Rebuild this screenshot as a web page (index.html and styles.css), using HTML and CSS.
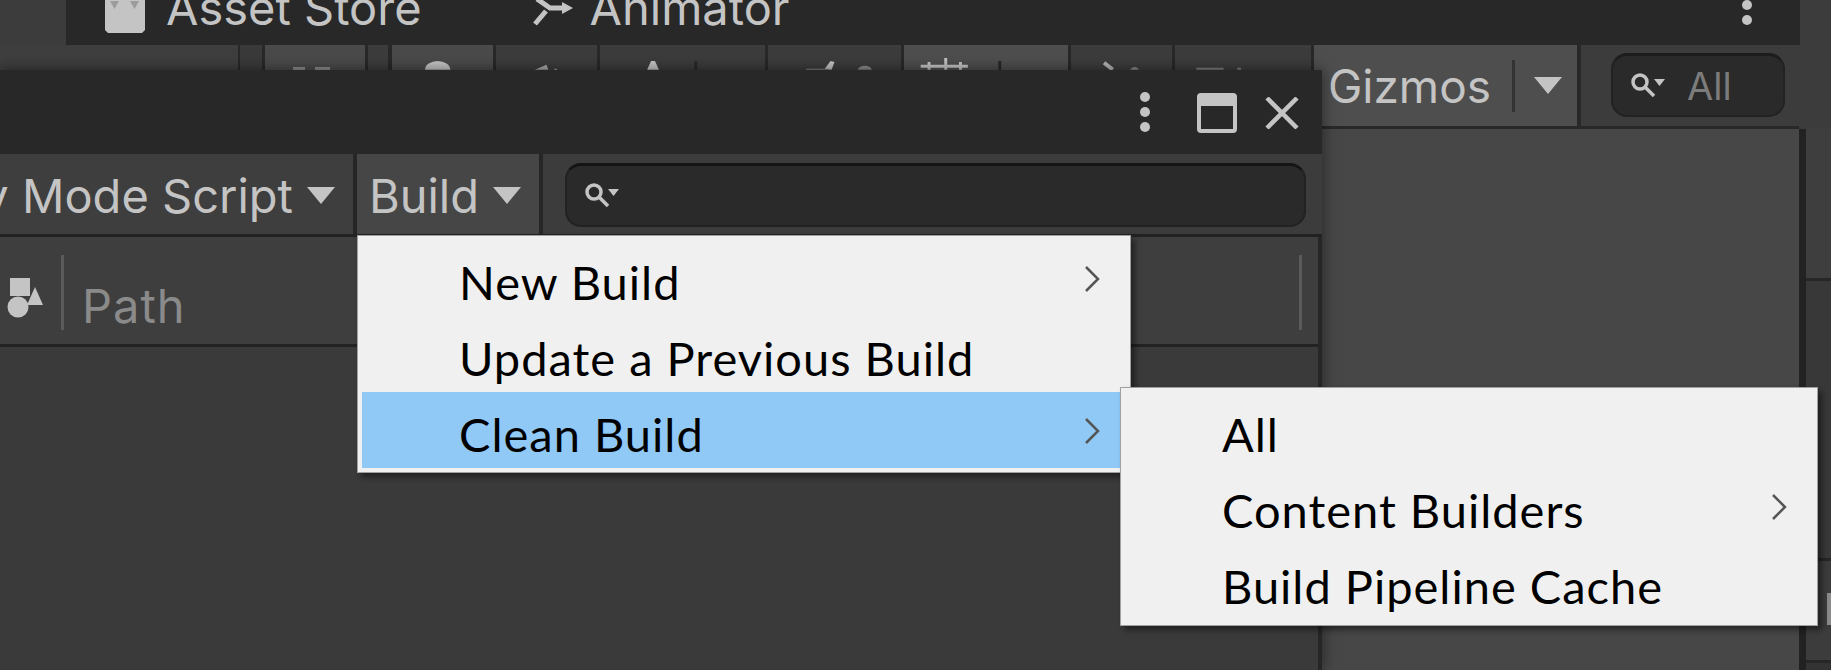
FILE: index.html
```html
<!DOCTYPE html>
<html lang="en">
<head>
  <meta charset="UTF-8" />
  <title>Addressables Groups</title>
  <link rel="stylesheet" href="styles.css">
</head>
<body>

<div class="editor">
  <div class="tabs">
    <div class="tab tab-store">
      <svg class="store-icon" viewBox="0 0 40 33">
        <path fill="#c4c4c4" d="M0 0h40v30l-3 3H3l-3-3z"/>
        <path fill="#9c9c9c" d="M5 1h9l-4.500 8zM25 1h9l-4.500 8z"/>
      </svg>
      <span>Asset Store</span>
    </div>
    <div class="tab tab-animator">
      <svg class="animator-icon" viewBox="0 0 41 26">
        <path fill="none" stroke="#c4c4c4" stroke-width="5" d="M3 24L14 11M5 -1l13 9h14"/>
        <path fill="#c4c4c4" d="M30 2l11 6-11 6z"/>
      </svg>
      <span>Animator</span>
    </div>
    <div class="tab-dots">
      <i></i><i></i><i></i>
    </div>
  </div>

  <div class="toolbar">
    <div class="tool-spacer"></div>
    <div class="tool tool-a">
      <svg class="tool-icon" viewBox="0 0 100 25"><path fill="#8a8a8a" d="M28 22h12v3H28zM50 22h15v3H50z"/></svg>
    </div>
    <div class="tool tool-b">
      <svg class="tool-icon" viewBox="0 0 104 25"><path fill="#c4c4c4" d="M34 25a13 9 0 0 1 26 0z"/></svg>
    </div>
    <div class="tool tool-c">
      <svg class="tool-icon" viewBox="0 0 104 25"><path fill="#a8a8a8" d="M40 25l12-5 2 5zM60 24h3v1h-3z"/></svg>
    </div>
    <div class="tool tool-d">
      <svg class="tool-icon" viewBox="0 0 168 25"><path fill="#c4c4c4" d="M48 25l4-9h4l4 9z"/><path fill="#282828" d="M96 16h3v9h-3z"/></svg>
    </div>
    <div class="tool tool-e">
      <svg class="tool-icon" viewBox="0 0 136 25"><path fill="#c4c4c4" d="M58 24l6-8 4 1-3 8z"/><path fill="#8a8a8a" d="M39 24h24v1H39z"/><path fill="#8a8a8a" d="M92 25a7 4 0 0 1 14 0z"/></svg>
    </div>
    <div class="tool tool-f">
      <svg class="tool-icon" viewBox="0 0 167 25"><path fill="#c4c4c4" d="M17 20h48v3H17zM24 17h3v8h-3zM41 13h3v12h-3zM56 17h3v8h-3z"/><path fill="#282828" d="M96 16h3v9h-3z"/></svg>
    </div>
    <div class="tool tool-g">
      <svg class="tool-icon" viewBox="0 0 104 25"><path fill="none" stroke="#b4b4b4" stroke-width="4" d="M34 18l9 7"/><path fill="#8a8a8a" d="M61 25a5 5 0 0 1 9 0z"/></svg>
    </div>
    <div class="tool tool-h">
      <svg class="tool-icon" viewBox="0 0 140 25"><path fill="#7c7c7c" d="M22 23h28v2H22zM64 23h4v2h-4z"/></svg>
    </div>
    <div class="gizmos">
      <span>Gizmos</span>
      <i class="gizmos-line"></i>
      <i class="arrow"></i>
    </div>
    <div class="tool-gap"></div>
    <div class="scene-search">
      <svg class="search-icon" viewBox="0 0 36 28">
        <circle cx="10" cy="10" r="7" fill="none" stroke="#c4c4c4" stroke-width="3.500"/>
        <path fill="none" stroke="#c4c4c4" stroke-width="3.500" d="M15 15l9 9"/>
        <path fill="#c4c4c4" d="M24 7h11l-5.500 7z"/>
      </svg>
      <span>All</span>
    </div>
  </div>

  <div class="scene">
    <div class="scene-view"></div>
    <div class="side-strip"></div>
    <div class="side-panel">
      <div class="side-top"></div>
      <div class="side-mid"></div>
      <div class="side-low"><i class="side-mark"></i></div>
      <div class="side-end"></div>
    </div>
  </div>
</div>

<div class="window">
  <div class="win-title">
    <div class="win-dots"><i></i><i></i><i></i></div>
    <svg class="win-max" viewBox="0 0 40 40">
      <rect x="2" y="2" width="36" height="36" rx="2" fill="none" stroke="#c4c4c4" stroke-width="4"/>
      <rect x="2" y="2" width="36" height="11" fill="#c4c4c4"/>
    </svg>
    <svg class="win-close" viewBox="0 0 34 32">
      <path fill="none" stroke="#c4c4c4" stroke-width="4.500" d="M2 1l30 30M32 1L2 31"/>
    </svg>
  </div>
  <div class="win-toolbar">
    <div class="drop drop-script">
      <span>Play Mode Script</span>
      <i class="arrow"></i>
    </div>
    <div class="drop drop-build">
      <span>Build</span>
      <i class="arrow"></i>
    </div>
    <div class="win-search">
      <svg class="search-icon" viewBox="0 0 36 28">
        <circle cx="10" cy="10" r="7" fill="none" stroke="#c4c4c4" stroke-width="3.500"/>
        <path fill="none" stroke="#c4c4c4" stroke-width="3.500" d="M15 15l9 9"/>
        <path fill="#c4c4c4" d="M24 7h11l-5.500 7z"/>
      </svg>
    </div>
  </div>
  <div class="list-header">
    <svg class="type-icon" viewBox="0 0 36 40">
      <rect x="3" y="0" width="20" height="18" fill="#c4c4c4"/>
      <circle cx="11" cy="29" r="10.500" fill="#c4c4c4"/>
      <path fill="#c4c4c4" d="M28 9l8 18H20z"/>
    </svg>
    <i class="col-line"></i>
    <span class="col-path">Path</span>
    <i class="col-line col-end"></i>
  </div>
  <div class="list-body"></div>
</div>

<div class="menu menu-build">
  <div class="menu-row">
    <span>New Build</span>
    <svg class="chevron" viewBox="0 0 16 26"><path fill="none" stroke="#555" stroke-width="2.500" d="M2 1l12 12L2 25"/></svg>
  </div>
  <div class="menu-row">
    <span>Update a Previous Build</span>
  </div>
  <div class="menu-row active">
    <span>Clean Build</span>
    <svg class="chevron" viewBox="0 0 16 26"><path fill="none" stroke="#555" stroke-width="2.500" d="M2 1l12 12L2 25"/></svg>
  </div>
</div>

<div class="menu menu-clean">
  <div class="menu-row">
    <span>All</span>
  </div>
  <div class="menu-row">
    <span>Content Builders</span>
    <svg class="chevron" viewBox="0 0 16 26"><path fill="none" stroke="#555" stroke-width="2.500" d="M2 1l12 12L2 25"/></svg>
  </div>
  <div class="menu-row">
    <span>Build Pipeline Cache</span>
  </div>
</div>

</body>
</html>
```

FILE: styles.css
```css
body {
  margin: 0;
  width: 1831px;
  height: 670px;
  overflow: hidden;
  position: relative;
  background-color: #3c3c3c;
  font-family: Inter, "Liberation Sans", sans-serif;
  font-size: 47px;
  color: #c4c4c4;
}

i {
  display: block;
}

.editor {
  height: 670px;
  display: flex;
  flex-direction: column;
}

/* top tabs, cut off by the top of the picture */
.tabs {
  height: 45px;
  margin-left: 66px;
  margin-right: 31px;
  flex: none;
  display: flex;
  align-items: flex-end;
  background-color: #282828;
  overflow: hidden;
}

.tab {
  display: flex;
  align-items: center;
  height: 56px;
  line-height: 56px;
  padding-bottom: 9px;
  flex: none;
}

.tab-store {
  margin-left: 39px;
  gap: 21px;
}

.store-icon {
  width: 40px;
  height: 33px;
  margin-top: 20px;
  align-self: flex-start;
}

.tab-animator {
  margin-left: 110px;
  gap: 17px;
}

.animator-icon {
  width: 41px;
  height: 26px;
  margin-top: 20px;
  align-self: flex-start;
}

.tab-dots {
  margin-left: auto;
  margin-right: 48px;
  padding-bottom: 20px;
  display: flex;
  flex-direction: column;
  gap: 5px;
}

.tab-dots i, .win-dots i {
  width: 10px;
  height: 10px;
  border-radius: 50%;
  background-color: #c4c4c4;
}

/* scene toolbar, mostly hidden by the floating window */
.toolbar {
  height: 81px;
  margin-right: 32px;
  flex: none;
  display: flex;
  background-color: #3c3c3c;
  border-bottom: 3px solid #282828;
}

.tool-spacer {
  flex: none;
  width: 265px;
  box-sizing: border-box;
  border-right: 3px solid #282828;
  background: linear-gradient(to right, #3e3e3e 238px, #282828 238px, #282828 240px, #3a3a3a 240px);
}

.tool {
  flex: none;
  box-sizing: border-box;
  background-color: #3c3c3c;
  border-right: 3px solid #282828;
}

.tool-icon {
  display: block;
  width: 100%;
  height: 25px;
}

.tool-a {
  width: 103px;
  margin-right: 24px;
  background-color: #4a4a4a;
}

.tool-b {
  width: 104px;
  background-color: #4a4a4a;
  box-shadow: -4px 0 0 #282828;
}

.tool-c { width: 104px; }
.tool-d { width: 168px; }
.tool-e { width: 136px; }
.tool-f { width: 167px; background-color: #4e4e4e; }
.tool-g { width: 104px; }
.tool-h { width: 139px; }

.gizmos {
  flex: none;
  width: 263px;
  padding-left: 14px;
  box-sizing: border-box;
  display: flex;
  align-items: center;
  font-size: 46px;
  background-color: #4e4e4e;
}

.gizmos-line {
  width: 3px;
  height: 52px;
  margin-left: 21px;
  background-color: #333;
}

.gizmos .arrow {
  margin-left: 19px;
}

.arrow {
  flex: none;
  width: 0;
  height: 0;
  border-left: 14px solid transparent;
  border-right: 14px solid transparent;
  border-top: 17px solid #c4c4c4;
}

.tool-gap {
  flex: none;
  width: 4px;
  margin-right: 30px;
  background-color: #282828;
}

.scene-search {
  flex: none;
  width: 174px;
  height: 64px;
  margin-top: 8px;
  box-sizing: border-box;
  padding-left: 17px;
  display: flex;
  align-items: center;
  gap: 21px;
  font-size: 38px;
  color: #7c7c7c;
  background-color: #2a2a2a;
  border: 2px solid #222;
  border-top: 3px solid #1c1c1c;
  border-radius: 16px;
}

.search-icon {
  width: 36px;
  height: 28px;
  flex: none;
}

.scene {
  flex: 1;
  display: flex;
}

.scene-view {
  flex: 1;
  background-color: #474747;
}

.side-strip {
  width: 7px;
  background-color: #222;
}

.side-panel {
  width: 25px;
  display: flex;
  flex-direction: column;
}

.side-top {
  height: 149px;
  background-color: #3e3e3e;
  border-bottom: 3px solid #262626;
}

.side-mid {
  height: 277px;
  background-color: #383838;
  border-bottom: 3px solid #262626;
}

.side-low {
  height: 102px;
  display: flex;
  justify-content: flex-end;
  padding-top: 32px;
  box-sizing: border-box;
  background-color: #3c3c3c;
  border-bottom: 3px solid #262626;
}

.side-mark {
  width: 4px;
  height: 32px;
  background-color: #8a8a8a;
}

.side-end {
  flex: 1;
  background-color: #333;
}

/* floating window */
.window {
  position: absolute;
  left: 0;
  top: 70px;
  width: 1322px;
  height: 600px;
  display: flex;
  flex-direction: column;
  overflow: hidden;
  background-color: #262626;
  box-shadow: 0 0 14px rgba(0,0,0,0.5);
}

.win-title {
  height: 84px;
  flex: none;
  display: flex;
  align-items: center;
  justify-content: flex-end;
  background-color: #282828;
}

.win-dots {
  display: flex;
  flex-direction: column;
  gap: 5px;
  margin-right: 47px;
}

.win-max {
  width: 40px;
  height: 40px;
  margin-right: 28px;
  margin-top: 2px;
}

.win-close {
  width: 34px;
  height: 32px;
  margin-right: 23px;
  margin-top: 2px;
}

.win-toolbar {
  height: 80px;
  flex: none;
  display: flex;
  background-color: #3c3c3c;
  border-bottom: 3px solid #222;
}

.drop {
  flex: none;
  display: flex;
  align-items: center;
  justify-content: flex-end;
  padding-top: 2px;
  border-right: 4px solid #262626;
  box-sizing: border-box;
}

.drop .arrow {
  margin-left: 14px;
  margin-top: 1px;
}

.drop-script {
  width: 357px;
  padding-right: 18px;
  background-color: #3e3e3e;
}

.drop-script span {
  white-space: nowrap;
}

.drop-build {
  width: 186px;
  padding-right: 18px;
  background-color: #464646;
}

.win-search {
  flex: 1;
  height: 64px;
  margin: 9px 16px 0 22px;
  box-sizing: border-box;
  padding-left: 17px;
  display: flex;
  align-items: center;
  background-color: #2a2a2a;
  border: 2px solid #222;
  border-top: 3px solid #141414;
  border-radius: 16px;
}

.list-header {
  height: 107px;
  flex: none;
  margin-right: 4px;
  display: flex;
  align-items: center;
  padding-right: 16px;
  background-color: #3e3e3e;
  border-bottom: 3px solid #222;
  color: #8a8a8a;
}

.type-icon {
  width: 36px;
  height: 40px;
  margin-left: 7px;
  margin-top: 14px;
}

.col-line {
  width: 3px;
  height: 75px;
  margin-left: 18px;
  margin-top: 4px;
  background-color: #5a5a5a;
}

.col-path {
  margin-left: 18px;
  margin-top: 29px;
  letter-spacing: 1px;
}

.col-end {
  margin-left: auto;
}

.list-body {
  flex: 1;
  margin-right: 4px;
  background-color: #3a3a3a;
}

/* dropdown menus */
.menu {
  position: absolute;
  box-sizing: border-box;
  padding: 4px 5px;
  background-color: #f0f0f0;
  border: 1px solid #a0a0a0;
  box-shadow: 4px 4px 6px rgba(0,0,0,0.45);
  font-family: Lato, "Liberation Sans", sans-serif;
  font-size: 47px;
  letter-spacing: 1px;
  color: #000;
}

.menu-build {
  left: 357px;
  top: 235px;
  width: 774px;
  height: 238px;
  padding-left: 4px;
}

.menu-clean {
  left: 1120px;
  top: 387px;
  width: 698px;
  height: 239px;
}

.menu-row {
  height: 76px;
  box-sizing: border-box;
  padding-top: 7px;
  display: flex;
  align-items: center;
  justify-content: space-between;
  padding-left: 97px;
  padding-right: 25px;
}

.menu-clean .menu-row {
  padding-left: 96px;
  padding-right: 25px;
}

.menu-row.active {
  background-color: #90c8f6;
}

.chevron {
  width: 16px;
  height: 26px;
  margin-top: -6px;
  flex: none;
}
```
